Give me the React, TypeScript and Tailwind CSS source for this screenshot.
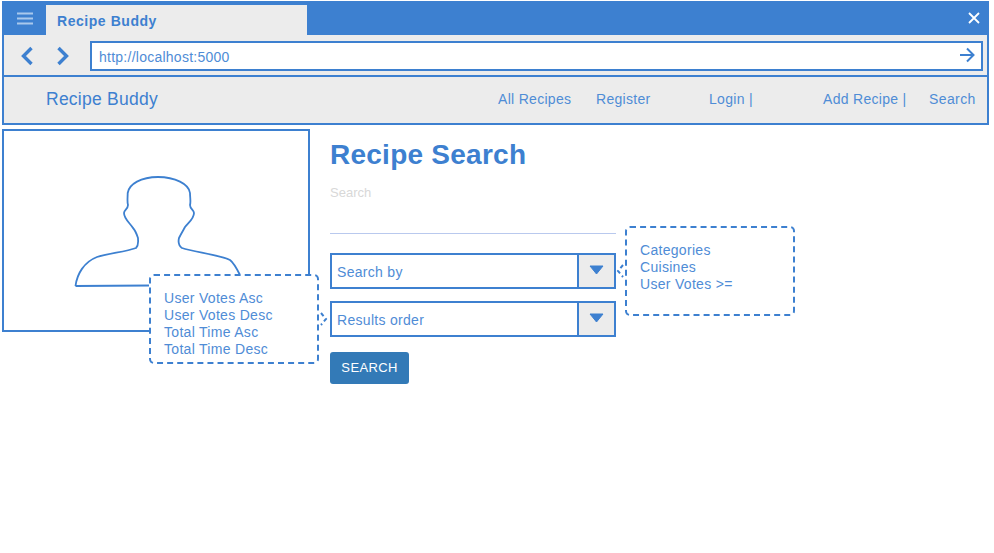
import React from "react";

const BLUE = "#3d80d0";

const Caret = () => (
  <div className="flex w-[37px] items-center justify-center border-l-2 border-[#3d80d0] bg-[#ececec]">
    <svg width="15" height="10" viewBox="0 0 15 10" className="-mt-[2px]">
      <path d="M1 1h13L7.5 9z" fill={BLUE} stroke={BLUE} strokeWidth="1" />
    </svg>
  </div>
);

const SelectBox = ({ label }: { label: string }) => (
  <div className="flex h-[36px] w-[286px] border-2 border-[#3d80d0] bg-white">
    <span className="flex-1 pl-[5px] pt-px text-[14px] leading-[32px] tracking-[0.3px] text-[#4f8cd6]">
      {label}
    </span>
    <Caret />
  </div>
);

const Callout = ({
  items,
  className,
  side,
}: {
  items: string[];
  className: string;
  side: "left" | "right";
}) => (
  <div
    className={`absolute rounded-[5px] border-2 border-dashed border-[#3d80d0] bg-white pl-[13px] text-[14px] leading-[17px] tracking-[0.3px] text-[#4f8cd6] ${className}`}
  >
    {items.map((item) => (
      <div key={item}>{item}</div>
    ))}
    {side === "right" ? (
      <svg width="8" height="14" viewBox="0 0 8 14" className="absolute -right-[11px] top-[36px]">
        <path d="M1 1l5 6-5 6" fill="none" stroke={BLUE} strokeWidth="2" strokeDasharray="4 3" />
      </svg>
    ) : (
      <svg width="8" height="14" viewBox="0 0 8 14" className="absolute -left-[11px] top-[36px]">
        <path d="M7 1L2 7l5 6" fill="none" stroke={BLUE} strokeWidth="2" strokeDasharray="4 3" />
      </svg>
    )}
  </div>
);

const App = () => {
  return (
    <div className="relative h-[553px] w-[994px] bg-white pl-[2px] pr-[5px] pt-px font-['Liberation_Sans',sans-serif]">
      {/* browser chrome */}
      <div className="flex h-[34px] items-end bg-[#3d80d0]">
        <div className="flex h-[34px] w-[44px] items-center justify-center">
          <svg width="18" height="13" viewBox="0 0 18 13" className="ml-[1px]">
            <path d="M1 1.5h16M1 6.5h16M1 11.5h16" stroke="#a9c8ec" strokeWidth="2" />
          </svg>
        </div>
        <div className="h-[30px] w-[261px] bg-[#ececec] pl-[11px] text-[14px] font-bold leading-[32px] tracking-[0.55px] text-[#3d80d0]">
          Recipe Buddy
        </div>
        <div className="flex h-[34px] flex-1 items-center justify-end pr-[9px]">
          <svg width="12" height="12" viewBox="0 0 12 12">
            <path d="M1 1l10 10M11 1L1 11" stroke="#ffffff" strokeWidth="1.8" />
          </svg>
        </div>
      </div>

      <div className="flex h-[40px] items-center border-x-2 border-[#3d80d0] bg-[#ececec] pt-[2px]">
        <div className="flex w-[86px] items-center pl-[16px]">
          <svg width="14" height="20" viewBox="0 0 14 20" className="-mt-[1px]">
            <path d="M11.5 2L3.5 10l8 8" fill="none" stroke={BLUE} strokeWidth="3.4" />
          </svg>
          <svg width="14" height="20" viewBox="0 0 14 20" className="-mt-[1px] ml-[22px]">
            <path d="M2.5 2l8 8-8 8" fill="none" stroke={BLUE} strokeWidth="3.4" />
          </svg>
        </div>
        <div className="flex h-[30px] w-[893px] items-center justify-between border-2 border-[#3d80d0] bg-white pl-[7px] pr-[6px]">
          <span className="pt-[2px] text-[14px] tracking-[0.25px] text-[#4f8cd6]">http://localhost:5000</span>
          <svg width="16" height="16" viewBox="0 0 16 16" className="-mt-[2px]">
            <path d="M1 8h13.5M8 1.5L14.5 8 8 14.5" fill="none" stroke={BLUE} strokeWidth="2" />
          </svg>
        </div>
      </div>

      {/* site nav */}
      <nav className="flex h-[50px] items-center border-2 border-[#3d80d0] bg-[#ececec] pb-[1px] pl-[42px] text-[14px] tracking-[0.3px] text-[#4f8cd6]">
        <span className="w-[452px] text-[17.5px] tracking-[0.25px] text-[#3d80d0]">Recipe Buddy</span>
        <span className="w-[98px]">All Recipes</span>
        <span className="w-[113px]">Register</span>
        <span className="w-[114px]">Login |</span>
        <span className="w-[106px]">Add Recipe |</span>
        <span className="tracking-[0.4px]">Search</span>
      </nav>

      {/* page body */}
      <div className="mt-[4px] flex items-start">
        <div className="flex h-[203px] w-[308px] items-start border-2 border-[#3d80d0] bg-white">
          <svg width="175" height="118" viewBox="0 0 175 118" className="ml-[66px] mt-[41px]">
            <path
              d="M5.5 114C7 102 14 90 27 85C40 81 55 80 66 76C69 73 68 70 68 66C66 60 64 57 63 56C60 51 54 47 54 41C54 38 58 37 58 33C57 30 57.7 25 57.7 21C59 12 71 5 88 5C105 5 119 12 120 21C120 25 121 30 120 33C120 37 124 38 124 41C124 47 118 51 115 55C114 57 112 60 109 66C108 70 108 73 112 76C125 80 150 83 160 88C164 91 167 97 170 103"
              fill="none"
              stroke={BLUE}
              strokeWidth="1.8"
            />
            <path d="M5.5 114L80 113.5" fill="none" stroke={BLUE} strokeWidth="1.8" />
          </svg>
        </div>
        <div className="pl-[20px]">
          <h1 className="mt-[8px] text-[28px] font-bold leading-[36px] tracking-[0.25px] text-[#3d80d0]">Recipe Search</h1>
          <label className="mt-[11px] block text-[13px] leading-[18px] text-[#d8d8d8]">Search</label>
          <div className="mt-[31px] h-px w-[286px] bg-[#b9c9ee]" />
          <div className="mt-[19px] flex flex-col gap-[12px]">
            <SelectBox label="Search by" />
            <SelectBox label="Results order" />
          </div>
          <button className="mt-[15px] h-[32px] w-[79px] rounded-[3px] bg-[#337ab7] text-[13px] tracking-[0.35px] text-white">
            SEARCH
          </button>
        </div>
      </div>

      <Callout
        side="right"
        className="left-[149px] top-[274px] h-[90px] w-[170px] pt-[14px]"
        items={["User Votes Asc", "User Votes Desc", "Total Time Asc", "Total Time Desc"]}
      />
      <Callout
        side="left"
        className="left-[625px] top-[226px] h-[90px] w-[170px] pt-[14px]"
        items={["Categories", "Cuisines", "User Votes >="]}
      />
    </div>
  );
};

export default App;
